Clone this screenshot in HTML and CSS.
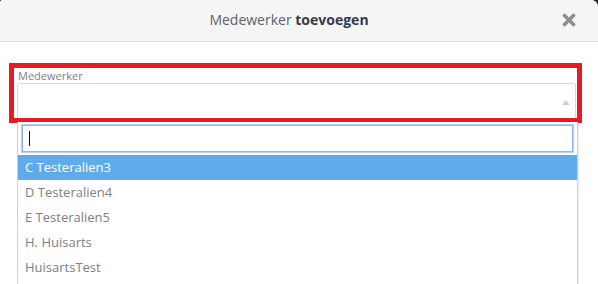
FILE: index.html
```html
<!DOCTYPE html>
<html lang="nl">
<head>
<meta charset="utf-8">
<title>Medewerker toevoegen</title>
<link rel="stylesheet" href="styles.css">
</head>
<body>
<div class="modal">
  <div class="modal-header">
    <span></span>
    <h4 class="modal-title">Medewerker <strong>toevoegen</strong></h4>
    <button class="close" type="button" aria-label="Sluiten">
      <svg width="14" height="14" viewBox="0 0 14 14"><path d="M2.5 2.5 L11.5 11.5 M11.5 2.5 L2.5 11.5" stroke="#8b8e94" stroke-width="3.6" stroke-linecap="round"/></svg>
    </button>
  </div>
  <div class="modal-body">
    <div class="form-group">
      <label class="field-label">Medewerker</label>
      <div class="select-box">
        <span class="arrow"></span>
      </div>
      <div class="highlight"></div>
      <div class="dropdown">
        <div class="search"><span class="caret"></span></div>
        <ul class="options">
          <li class="option selected">C Testeralien3</li>
          <li class="option">D Testeralien4</li>
          <li class="option">E Testeralien5</li>
          <li class="option">H. Huisarts</li>
          <li class="option">HuisartsTest</li>
        </ul>
      </div>
    </div>
  </div>
</div>
</body>
</html>
```

FILE: styles.css
```css
html, body {
  margin: 0;
  padding: 0;
  height: 100%;
  overflow: hidden;
  background: #2a2a2a;
}
body {
  font-family: "Open Sans", "Liberation Sans", sans-serif;
}
.modal {
  background: #ffffff;
  height: 100%;
  border-top-left-radius: 3px;
  border-top-right-radius: 7px;
  overflow: hidden;
}
.modal-header {
  height: 42px;
  box-sizing: border-box;
  background: #f5f5f5;
  border-bottom: 1px solid #dcdcdc;
  display: grid;
  grid-template-columns: 1fr auto 1fr;
  align-items: center;
  padding-right: 20px;
}
.modal-title {
  margin: 0;
  font-size: 14px;
  font-weight: 400;
  color: #5b6270;
  line-height: 20px;
  padding-bottom: 1px;
}
.modal-title strong {
  font-weight: 700;
  color: #333c4a;
}
.close {
  justify-self: end;
  margin-right: 2px;
  background: none;
  border: 0;
  padding: 0;
  width: 14px;
  height: 14px;
  display: flex;
  margin-bottom: 1px;
}
.modal-body {
  padding: 27px 22px 0 17px;
}
.form-group {
  position: relative;
  width: 559px;
}
.field-label {
  display: block;
  font-size: 11px;
  line-height: 13px;
  color: #7d828c;
  padding-left: 1px;
  margin-bottom: 1px;
}
.select-box {
  height: 38px;
  box-sizing: border-box;
  border: 1px solid #d9d9d9;
  border-radius: 2px;
  background: #fff;
  display: flex;
  justify-content: flex-end;
  align-items: center;
  padding-right: 5px;
}
.arrow {
  width: 0;
  height: 0;
  border-left: 4px solid transparent;
  border-right: 4px solid transparent;
  border-bottom: 5px solid #cfcfcf;
}
.highlight {
  position: absolute;
  left: -8px;
  top: -6px;
  width: 573px;
  height: 60px;
  box-sizing: border-box;
  border: 5px solid #e51c23;
}
.dropdown {
  position: absolute;
  left: 0;
  top: 53px;
  width: 561px;
  box-sizing: border-box;
  background: #fff;
  border: 1px solid #d0d0d0;
  border-top: 0;
  padding: 3px 0 30px 0;
  box-shadow: 1px 0 1px rgba(0,0,0,0.08);
}
.search {
  margin: 0 4px 0 4px;
  height: 27px;
  box-sizing: border-box;
  border: 1px solid #8fb6f2;
  box-shadow: 0 0 0 1px #b9d1f6;
  display: flex;
  align-items: center;
  padding-left: 6px;
}
.caret {
  width: 1px;
  height: 15px;
  background: #111;
}
.options {
  list-style: none;
  margin: 3px 0 0 0;
  padding: 0;
}
.option {
  height: 25px;
  line-height: 25px;
  padding-left: 7px;
  font-size: 13px;
  color: #7c7f85;
}
.option.selected {
  background: #5fabea;
  color: #ffffff;
}
```
